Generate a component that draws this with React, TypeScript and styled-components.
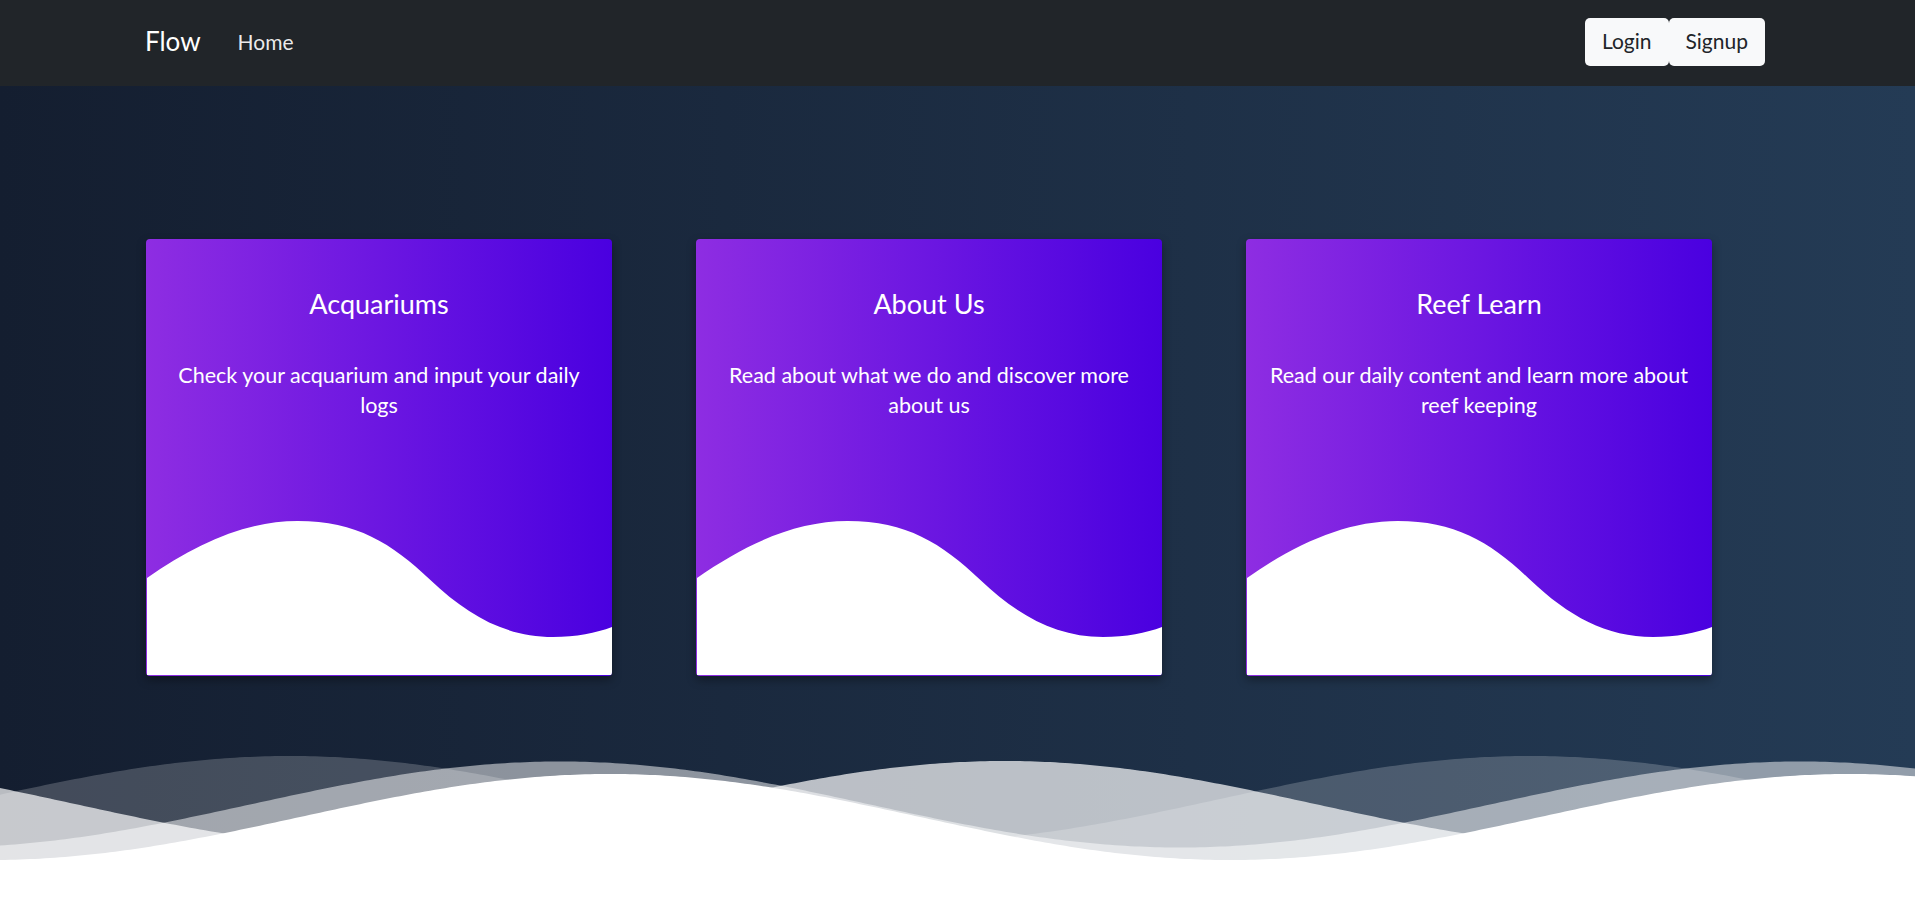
import React from "react";
import styled, { createGlobalStyle } from "styled-components";

const GlobalStyle = createGlobalStyle`
  html, body {
    margin: 0;
    padding: 0;
    background: #ffffff;
  }
  body {
    font-family: Lato, "Open Sans", "Noto Sans", sans-serif;
  }
  *, *::before, *::after {
    box-sizing: border-box;
  }
`;

const Page = styled.div`
  min-height: 898px;
  background: #ffffff;
`;

const NavBar = styled.nav`
  height: 86px;
  background: #212529;
  display: flex;
  align-items: center;
  padding: 0 150px 0 145px;
`;

const Brand = styled.a`
  font-size: 26px;
  line-height: 1.2;
  color: #ffffff;
  text-decoration: none;
  margin-right: 37px;
  margin-top: -2px;
`;

const NavLink = styled.a`
  font-size: 21px;
  line-height: 1.2;
  color: rgba(255, 255, 255, 0.92);
  text-decoration: none;
  margin-top: -3px;
`;

const Spacer = styled.div`
  flex: 1;
`;

const AuthGroup = styled.div`
  display: flex;
  margin-top: -2px;
`;

const AuthButton = styled.button`
  height: 48px;
  padding: 0 17px 3px;
  background: #f8f9fa;
  border: none;
  border-radius: 5px;
  font-family: Lato, "Open Sans", sans-serif;
  font-size: 21px;
  color: #212529;
  cursor: pointer;
`;

const Hero = styled.section`
  background: linear-gradient(to right, #141e30, #243b55);
  padding-top: 153px;
`;

const CardRow = styled.div`
  display: flex;
  gap: 84px;
  padding-left: 146px;
`;

const Card = styled.div`
  width: 466px;
  height: 437px;
  background: linear-gradient(to right, #8e2de2, #4a00e0);
  border-radius: 4px;
  box-shadow: 0 4px 10px rgba(0, 0, 0, 0.35);
  display: flex;
  flex-direction: column;
  overflow: hidden;
`;

const CardBody = styled.div`
  flex: 1;
  padding: 49px 16px 0;
  text-align: center;
  color: #ffffff;
`;

const CardTitle = styled.h3`
  margin: 0;
  font-size: 27px;
  font-weight: 400;
  line-height: 1.2;
`;

const CardText = styled.p`
  margin: 40px 0 0;
  font-size: 21.5px;
  line-height: 30px;
`;

const CardWave = styled.svg`
  display: block;
  width: calc(100% - 1px);
  height: 157px;
  margin: 0 0 1px 1px;
`;

const Waves = styled.svg`
  display: block;
  width: 100%;
  height: 140px;
  margin-top: 54px;
`;

const WAVE_W = 1915;
const WAVE_H = 140;

function wavePath(xc: number, c: number, a = 43, period = 1240): string {
  let d = `M0 ${WAVE_H}`;
  for (let x = 0; x <= WAVE_W; x += 5) {
    const y = c - a * Math.cos((2 * Math.PI * (x - xc)) / period);
    d += ` L${x} ${y.toFixed(2)}`;
  }
  d += ` L${WAVE_W} ${WAVE_H} Z`;
  return d;
}

const layers = [
  { xc: 290, c: 69, fill: "rgba(255,255,255,0.2)" },
  { xc: 560, c: 74.5, fill: "rgba(255,255,255,0.5)" },
  { xc: 1005, c: 74, fill: "rgba(255,255,255,0.7)" },
  { xc: 610, c: 87, fill: "#ffffff" },
];

const cards = [
  {
    title: "Acquariums",
    text: "Check your acquarium and input your daily logs",
  },
  {
    title: "About Us",
    text: "Read about what we do and discover more about us",
  },
  {
    title: "Reef Learn",
    text: "Read our daily content and learn more about reef keeping",
  },
];

function InfoCard({ title, text }: { title: string; text: string }) {
  return (
    <Card>
      <CardBody>
        <CardTitle>{title}</CardTitle>
        <CardText>{text}</CardText>
      </CardBody>
      <CardWave viewBox="0 0 466 157" preserveAspectRatio="none">
        <path
          d="M0 60 C50 25 100 3 151 3 C210 3 245 25 284 62 C322 98 360 119 407 119 C430 119 450 115 466 109 L466 157 L0 157 Z"
          fill="#ffffff"
        />
      </CardWave>
    </Card>
  );
}

export default function App() {
  return (
    <Page>
      <GlobalStyle />
      <NavBar>
        <Brand href="#">Flow</Brand>
        <NavLink href="#">Home</NavLink>
        <Spacer />
        <AuthGroup>
          <AuthButton>Login</AuthButton>
          <AuthButton>Signup</AuthButton>
        </AuthGroup>
      </NavBar>
      <Hero>
        <CardRow>
          {cards.map((c) => (
            <InfoCard key={c.title} title={c.title} text={c.text} />
          ))}
        </CardRow>
        <Waves viewBox={`0 0 ${WAVE_W} ${WAVE_H}`} preserveAspectRatio="none">
          {layers.map((l, i) => (
            <path key={i} d={wavePath(l.xc, l.c)} fill={l.fill} />
          ))}
        </Waves>
      </Hero>
    </Page>
  );
}
